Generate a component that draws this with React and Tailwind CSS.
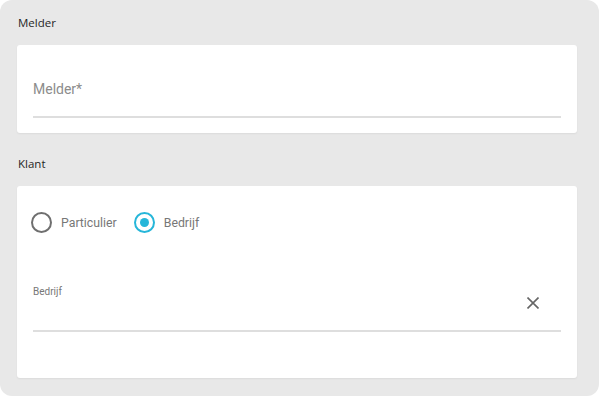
import React from "react";

function Radio({ checked, label }) {
  return (
    <label className="flex items-center gap-[9px] cursor-pointer">
      {checked ? (
        <span className="flex h-[21px] w-[21px] items-center justify-center rounded-full border-2 border-[#26b6d9]">
          <span className="h-[9px] w-[9px] rounded-full bg-[#26b6d9]" />
        </span>
      ) : (
        <span className="h-[21px] w-[21px] rounded-full border-2 border-[#6f6f6f]" />
      )}
      <span className="text-[12.3px] leading-[20px] text-[#777]">{label}</span>
    </label>
  );
}

function App() {
  return (
    <div className="w-[599px] h-[396px] bg-[#e8e8e8] rounded-[12px] pl-[17px] pr-[22px] pt-[14px] pb-[18px] flex flex-col font-['Roboto',sans-serif]">
      {/* Melder */}
      <h2 className="text-[11.5px] leading-[18px] pl-px text-[#262626] font-['Open_Sans',sans-serif]">Melder</h2>
      <div className="mt-[13px] bg-white rounded-[3px] shadow-[0_1px_2px_rgba(0,0,0,0.06)] px-4 pt-[34px] pb-[15px]">
        <div className="text-[14px] leading-[20px] text-[#8c8c8c]">Melder*</div>
        <div className="mt-[17px] h-[2px] bg-[#dedede]" />
      </div>

      {/* Klant */}
      <h2 className="mt-[22px] text-[11.5px] leading-[18px] pl-px text-[#262626] font-['Open_Sans',sans-serif]">Klant</h2>
      <div className="mt-[13px] flex-1 bg-white rounded-[3px] shadow-[0_1px_2px_rgba(0,0,0,0.06)] px-4 pt-[26px]">
        <div className="flex items-center gap-[17px] -ml-[2px]">
          <Radio label="Particulier" />
          <Radio checked label="Bedrijf" />
        </div>
        <div className="mt-[53px] flex justify-between border-b-2 border-[#dedede] h-[46px]">
          <span className="text-[10px] leading-[12px] text-[#777]">Bedrijf</span>
          <button className="mt-[11px] mr-[22px] h-[12px] w-[12px] text-[#666]">
            <svg viewBox="0 0 12 12" width="12" height="12" fill="none" stroke="currentColor" strokeWidth="1.6">
              <path d="M0.5 0.5 L11.5 11.5 M11.5 0.5 L0.5 11.5" />
            </svg>
          </button>
        </div>
      </div>
    </div>
  );
}

export default App;
